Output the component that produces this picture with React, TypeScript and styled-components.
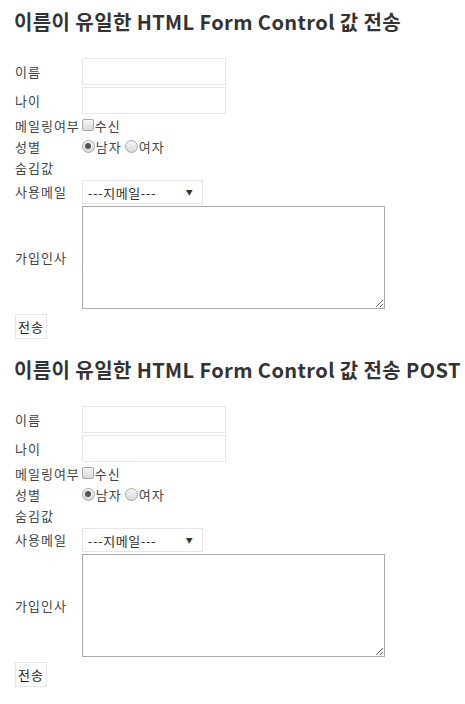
import styled, { createGlobalStyle } from "styled-components";

const GlobalStyle = createGlobalStyle`
  body {
    margin: 0;
    background: #fff;
    font-family: "Noto Sans CJK KR", "Noto Sans", sans-serif;
    color: #333;
  }
`;

const Page = styled.div`
  padding: 0 14px 20px 14px;
`;

const Section = styled.section`
  display: flex;
  flex-direction: column;
  & + & {
    margin-top: 8px;
  }
`;

const Title = styled.h3`
  font-size: 20px;
  font-weight: 700;
  line-height: 22px;
  margin: 11px 0 24px 0;
  color: #333;
  letter-spacing: 0.4px;
  white-space: nowrap;
`;

const FormTable = styled.table`
  border-collapse: separate;
  border-spacing: 0;
  font-size: 13px;
  letter-spacing: 1px;
`;

const Row = styled.tr<{ $h?: number }>`
  height: ${(p) => (p.$h ? `${p.$h}px` : "auto")};
`;

const LabelCell = styled.td`
  padding: 1px;
  line-height: 19px;
  white-space: nowrap;
  vertical-align: middle;
  color: #444;
`;

const FieldCell = styled.td`
  padding: 1px;
  line-height: 19px;
  vertical-align: middle;
  white-space: nowrap;
`;

const TextInput = styled.input`
  display: block;
  box-sizing: border-box;
  width: 144px;
  height: 27px;
  border: 1px solid #e6e6e6;
  outline: none;
  margin: 0;
  padding: 2px 4px;
`;

const Choice = styled.label`
  display: inline-flex;
  align-items: center;
  margin-right: 3px;
  color: #444;
  height: 19px;
  vertical-align: top;
`;

const Box = styled.input`
  appearance: none;
  width: ${(p) => (p.type === "radio" ? "13px" : "12px")};
  height: ${(p) => (p.type === "radio" ? "13px" : "12px")};
  margin: -1px 1px 0 0;
  box-sizing: border-box;
  border: 1px solid #a8a8a8;
  border-radius: ${(p) => (p.type === "radio" ? "50%" : "2px")};
  background: linear-gradient(#f6f6f6, #d8d8d8);
  position: relative;
  &:checked::after {
    content: "";
    position: absolute;
    left: 2.5px;
    top: 2.5px;
    width: 6px;
    height: 6px;
    border-radius: 50%;
    background: #555;
  }
`;

const SelectWrap = styled.div`
  position: relative;
  width: 121px;
`;

const Select = styled.select`
  appearance: none;
  display: block;
  box-sizing: border-box;
  width: 121px;
  height: 24px;
  border: 1px solid #e6e6e6;
  background: #fff;
  font-family: inherit;
  font-size: 13px;
  letter-spacing: 0.6px;
  color: #333;
  padding: 0 0 0 5px;
  margin: 1px 0 0 0;
  outline: none;
`;

const Arrow = styled.span`
  position: absolute;
  right: 9px;
  top: 8px;
  font-size: 7px;
  line-height: 9px;
  color: #333;
  pointer-events: none;
`;

const TextArea = styled.textarea`
  display: block;
  box-sizing: border-box;
  width: 303px;
  height: 103px;
  border: 1px solid #a9a9a9;
  margin: 0;
  outline: none;
`;

const SubmitButton = styled.button`
  display: block;
  margin: 3px 0 0 0;
  height: 25px;
  padding: 0 2px;
  background: #fff;
  border: 1px solid #e6e6e6;
  font-family: inherit;
  font-size: 13px;
  letter-spacing: 1px;
  color: #222;
`;

const FormBlock = ({ title }: { title: string }) => (
  <Section>
    <Title>{title}</Title>
    <form onSubmit={(e) => e.preventDefault()}>
      <FormTable>
        <tbody>
          <Row>
            <LabelCell>이름</LabelCell>
            <FieldCell>
              <TextInput type="text" name="name" />
            </FieldCell>
          </Row>
          <Row>
            <LabelCell>나이</LabelCell>
            <FieldCell>
              <TextInput type="text" name="age" />
            </FieldCell>
          </Row>
          <Row $h={21}>
            <LabelCell>메일링여부</LabelCell>
            <FieldCell>
              <Choice>
                <Box type="checkbox" name="mailing" />
                수신
              </Choice>
            </FieldCell>
          </Row>
          <Row $h={21}>
            <LabelCell>성별</LabelCell>
            <FieldCell>
              <Choice>
                <Box type="radio" name="gender" defaultChecked />
                남자
              </Choice>
              <Choice>
                <Box type="radio" name="gender" />
                여자
              </Choice>
            </FieldCell>
          </Row>
          <Row $h={21}>
            <LabelCell>숨김값</LabelCell>
            <FieldCell>
              <input type="hidden" name="hidden" value="hidden" />
            </FieldCell>
          </Row>
          <Row>
            <LabelCell>사용메일</LabelCell>
            <FieldCell>
              <SelectWrap>
                <Select name="mail" defaultValue="">
                  <option value="">---지메일---</option>
                </Select>
                <Arrow>▼</Arrow>
              </SelectWrap>
            </FieldCell>
          </Row>
          <Row>
            <LabelCell>가입인사</LabelCell>
            <FieldCell>
              <TextArea name="greeting" />
            </FieldCell>
          </Row>
          <Row>
            <LabelCell colSpan={2}>
              <SubmitButton type="submit">전송</SubmitButton>
            </LabelCell>
          </Row>
        </tbody>
      </FormTable>
    </form>
  </Section>
);

export default function App() {
  return (
    <Page>
      <GlobalStyle />
      <FormBlock title="이름이 유일한 HTML Form Control 값 전송" />
      <FormBlock title="이름이 유일한 HTML Form Control 값 전송 POST" />
    </Page>
  );
}
